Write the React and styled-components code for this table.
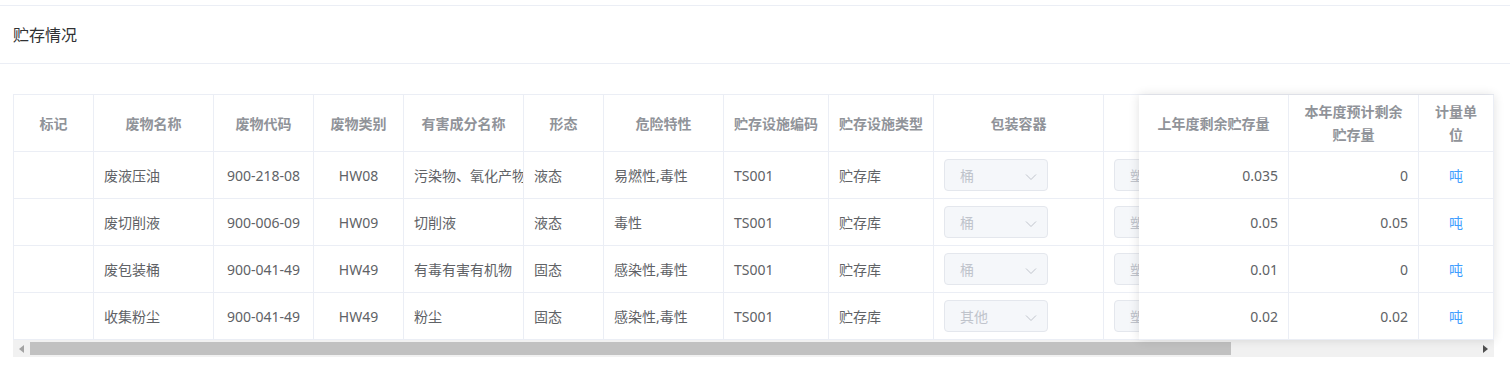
import React from 'react';
import styled, { createGlobalStyle } from 'styled-components';

const GlobalStyle = createGlobalStyle`
  html, body {
    margin: 0;
    padding: 0;
    background: #fff;
    font-family: "Noto Sans", "Noto Sans CJK SC", sans-serif;
  }
`;

const Page = styled.div`
  width: 1510px;
  padding-top: 5px;
`;

const Card = styled.div`
  border-top: 1px solid #ebeef5;
  background: #fff;
`;

const CardHeader = styled.div`
  height: 57px;
  display: flex;
  align-items: center;
  padding-left: 13px;
  border-bottom: 1px solid #ebeef5;
`;

const Title = styled.span`
  font-size: 16px;
  line-height: 20px;
  color: #303133;
`;

const CardBody = styled.div`
  padding: 30px 16px 0 13px;
`;

const TableWrap = styled.div`
  width: 1481px;
  border-top: 1px solid #ebeef5;
`;

const TableMain = styled.div`
  display: flex;
  position: relative;
`;

const ScrollArea = styled.div`
  width: 1126px;
  overflow: hidden;
  border-left: 1px solid #ebeef5;
`;

const FixedPanel = styled.div`
  width: 355px;
  background: #fff;
  position: relative;
  z-index: 2;
  box-shadow: 0 0 10px rgba(0, 0, 0, 0.12);
`;

const Grid = styled.div`
  display: grid;
  grid-template-columns: ${p => p.$cols};
  width: max-content;
`;

const HeadCell = styled.div`
  height: 57px;
  border-right: 1px solid #ebeef5;
  border-bottom: 1px solid #ebeef5;
  display: flex;
  align-items: center;
  justify-content: center;
  text-align: center;
  padding: 0 8px;
  box-sizing: border-box;
  font-size: 14px;
  font-weight: 700;
  line-height: 23px;
  color: #909399;
  white-space: pre-line;
`;

const Cell = styled.div`
  height: 47px;
  border-right: 1px solid #ebeef5;
  border-bottom: 1px solid #ebeef5;
  display: flex;
  align-items: center;
  justify-content: ${p => (p.$align === 'right' ? 'flex-end' : p.$align === 'center' ? 'center' : 'flex-start')};
  padding: 0 10px;
  box-sizing: border-box;
  font-size: 14px;
  line-height: 23px;
  color: ${p => (p.$link ? '#409eff' : '#606266')};
  white-space: nowrap;
  overflow: hidden;
`;

const Select = styled.div`
  width: 104px;
  height: 32px;
  flex: none;
  box-sizing: border-box;
  border: 1px solid #e4e7ed;
  border-radius: 4px;
  background: #f5f7fa;
  display: flex;
  align-items: center;
  justify-content: space-between;
  padding: 0 10px 0 15px;
  font-size: 14px;
  color: #c0c4cc;
`;

const Arrow = styled.svg`
  width: 12px;
  height: 12px;
  margin-top: 3px;
`;

const Scrollbar = styled.div`
  display: flex;
  height: 17px;
  background: #f1f1f1;
  align-items: center;
`;

const ScrollButton = styled.div`
  width: 17px;
  height: 17px;
  display: flex;
  align-items: center;
  justify-content: center;
`;

const Track = styled.div`
  flex: 1;
  height: 13px;
  display: flex;
`;

const Thumb = styled.div`
  height: 13px;
  background: #c1c1c1;
`;

const mainCols = [
  { title: '标记', w: 80, align: 'center' },
  { title: '废物名称', w: 120 },
  { title: '废物代码', w: 100, align: 'center' },
  { title: '废物类别', w: 90, align: 'center' },
  { title: '有害成分名称', w: 120 },
  { title: '形态', w: 80 },
  { title: '危险特性', w: 120 },
  { title: '贮存设施编码', w: 105 },
  { title: '贮存设施类型', w: 105 },
  { title: '包装容器', w: 170, select: true },
  { title: '包装材质', w: 170, select: true },
];

const fixedCols = [
  { title: '上年度剩余贮存量', w: 150, align: 'right' },
  { title: '本年度预计剩余\n贮存量', w: 130, align: 'right' },
  { title: '计量单\n位', w: 75, align: 'center', link: true },
];

const rows = [
  ['', '废液压油', '900-218-08', 'HW08', '污染物、氧化产物', '液态', '易燃性,毒性', 'TS001', '贮存库', '桶', '塑料', '0.035', '0', '吨'],
  ['', '废切削液', '900-006-09', 'HW09', '切削液', '液态', '毒性', 'TS001', '贮存库', '桶', '塑料', '0.05', '0.05', '吨'],
  ['', '废包装桶', '900-041-49', 'HW49', '有毒有害有机物', '固态', '感染性,毒性', 'TS001', '贮存库', '桶', '塑料', '0.01', '0', '吨'],
  ['', '收集粉尘', '900-041-49', 'HW49', '粉尘', '固态', '感染性,毒性', 'TS001', '贮存库', '其他', '塑料', '0.02', '0.02', '吨'],
];

function ChevronDown() {
  return (
    <Arrow viewBox="0 0 12 12">
      <path d="M1 3.5 L6 8.5 L11 3.5" fill="none" stroke="#c0c4cc" strokeWidth="1" />
    </Arrow>
  );
}

function renderCell(col, value, key) {
  if (col.select) {
    return (
      <Cell key={key}>
        <Select>
          <span>{value}</span>
          <ChevronDown />
        </Select>
      </Cell>
    );
  }
  return (
    <Cell key={key} $align={col.align} $link={col.link}>
      {value}
    </Cell>
  );
}

function StorageTable() {
  const mainTemplate = mainCols.map(c => c.w + 'px').join(' ');
  const fixedTemplate = fixedCols.map(c => c.w + 'px').join(' ');
  const n = mainCols.length;

  return (
    <TableWrap>
      <TableMain>
        <ScrollArea>
          <Grid $cols={mainTemplate}>
            {mainCols.map(c => (
              <HeadCell key={c.title}>{c.title}</HeadCell>
            ))}
            {rows.map((r, i) =>
              mainCols.map((c, j) => renderCell(c, r[j], i + '-' + j))
            )}
          </Grid>
        </ScrollArea>
        <FixedPanel>
          <Grid $cols={fixedTemplate}>
            {fixedCols.map(c => (
              <HeadCell key={c.title}>{c.title}</HeadCell>
            ))}
            {rows.map((r, i) =>
              fixedCols.map((c, j) => renderCell(c, r[n + j], 'f' + i + '-' + j))
            )}
          </Grid>
        </FixedPanel>
      </TableMain>
      <Scrollbar>
        <ScrollButton>
          <svg width="5" height="8" viewBox="0 0 5 8">
            <path d="M5 0 L0 4 L5 8 Z" fill="#a3a3a3" />
          </svg>
        </ScrollButton>
        <Track>
          <Thumb style={{ width: (1232 - 31) + 'px' }} />
        </Track>
        <ScrollButton>
          <svg width="5" height="8" viewBox="0 0 5 8">
            <path d="M0 0 L5 4 L0 8 Z" fill="#505050" />
          </svg>
        </ScrollButton>
      </Scrollbar>
    </TableWrap>
  );
}

export default function App() {
  return (
    <>
      <GlobalStyle />
      <Page>
        <Card>
          <CardHeader>
            <Title>贮存情况</Title>
          </CardHeader>
          <CardBody>
            <StorageTable />
          </CardBody>
        </Card>
      </Page>
    </>
  );
}
